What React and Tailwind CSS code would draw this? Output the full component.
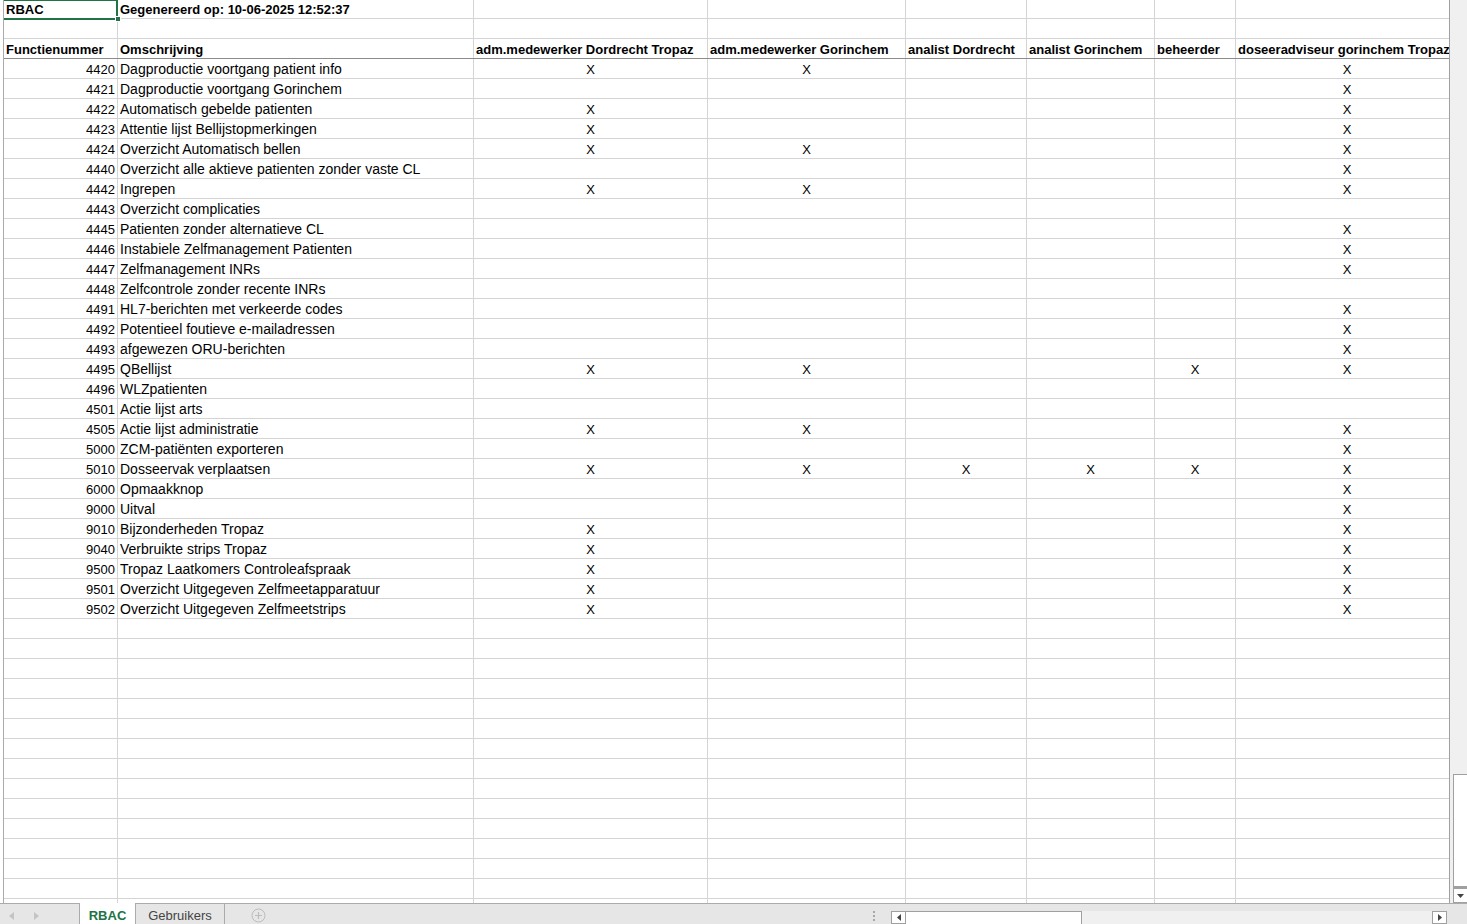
import React from 'react'

const colW = ['w-[114px]', 'w-[356px]', 'w-[234px]', 'w-[198px]', 'w-[121px]', 'w-[128px]', 'w-[81px]', 'w-[223px]']

const headers = [
  'Functienummer',
  'Omschrijving',
  'adm.medewerker Dordrecht Tropaz',
  'adm.medewerker Gorinchem',
  'analist Dordrecht',
  'analist Gorinchem',
  'beheerder',
  'doseeradviseur gorinchem Tropaz',
]

// marks: C..H = role columns
const rows = [
  ['4420', 'Dagproductie voortgang patient info', 'CDH'],
  ['4421', 'Dagproductie voortgang Gorinchem', 'H'],
  ['4422', 'Automatisch gebelde patienten', 'CH'],
  ['4423', 'Attentie lijst Bellijstopmerkingen', 'CH'],
  ['4424', 'Overzicht Automatisch bellen', 'CDH'],
  ['4440', 'Overzicht alle aktieve patienten zonder vaste CL', 'H'],
  ['4442', 'Ingrepen', 'CDH'],
  ['4443', 'Overzicht complicaties', ''],
  ['4445', 'Patienten zonder alternatieve CL', 'H'],
  ['4446', 'Instabiele Zelfmanagement Patienten', 'H'],
  ['4447', 'Zelfmanagement INRs', 'H'],
  ['4448', 'Zelfcontrole zonder recente INRs', ''],
  ['4491', 'HL7-berichten met verkeerde codes', 'H'],
  ['4492', 'Potentieel foutieve e-mailadressen', 'H'],
  ['4493', 'afgewezen ORU-berichten', 'H'],
  ['4495', 'QBellijst', 'CDGH'],
  ['4496', 'WLZpatienten', ''],
  ['4501', 'Actie lijst arts', ''],
  ['4505', 'Actie lijst administratie', 'CDH'],
  ['5000', 'ZCM-patiënten exporteren', 'H'],
  ['5010', 'Dosseervak verplaatsen', 'CDEFGH'],
  ['6000', 'Opmaakknop', 'H'],
  ['9000', 'Uitval', 'H'],
  ['9010', 'Bijzonderheden Tropaz', 'CH'],
  ['9040', 'Verbruikte strips Tropaz', 'CH'],
  ['9500', 'Tropaz Laatkomers Controleafspraak', 'CH'],
  ['9501', 'Overzicht Uitgegeven Zelfmeetapparatuur', 'CH'],
  ['9502', 'Overzicht Uitgegeven Zelfmeetstrips', 'CH'],
]

const roleKeys = ['C', 'D', 'E', 'F', 'G', 'H']

function Cell({ i, children, align = 'left', bold = false, wide = false }) {
  return (
    <div
      className={`${colW[i]} shrink-0 h-full flex items-center pt-[2px] border-r border-[#d4d4d4] px-[2px] whitespace-nowrap overflow-hidden ${
        align === 'right' ? 'justify-end' : align === 'center' ? 'justify-center' : 'justify-start'
      } ${bold ? 'font-bold' : ''} ${wide ? 'text-[14px]' : ''}`}
    >
      {children}
    </div>
  )
}

function Row({ cells, h = 'h-[20px]', dark = false, bold = false }) {
  return (
    <div className={`flex ${h} border-b ${dark ? 'border-[#8c8c8c]' : 'border-[#d4d4d4]'}`}>
      {colW.map((_, i) => {
        const c = cells[i] || {}
        return (
          <Cell key={i} i={i} align={c.align} bold={bold || c.bold} wide={c.wide}>
            {c.text}
          </Cell>
        )
      })}
    </div>
  )
}

export default function App() {
  const blanks = Array.from({ length: 18 })

  return (
    <div className="w-[1467px] h-[924px] overflow-hidden bg-white flex flex-col font-['Liberation_Sans',Arial,sans-serif] text-[13px] text-black">
      {/* sheet area */}
      <div className="flex h-[903px]">
        {/* clipped row headers */}
        <div className="w-[4px] shrink-0 border-r border-[#ababab] bg-white" />

        {/* grid */}
        <div className="relative w-[1445px] shrink-0 overflow-hidden">
          <Row
            h="h-[19px]"
            cells={[{ text: 'RBAC', bold: true }, { text: 'Gegenereerd op: 10-06-2025 12:52:37', bold: true }]}
          />
          <Row cells={[]} />
          <Row dark bold cells={headers.map(t => ({ text: t }))} />
          {rows.map(([num, desc, marks]) => (
            <Row
              key={num}
              cells={[
                { text: num, align: 'right' },
                { text: desc, wide: true },
                ...roleKeys.map(k => ({ text: marks.includes(k) ? 'X' : '', align: 'center' })),
              ]}
            />
          ))}
          {blanks.map((_, i) => (
            <Row key={'b' + i} cells={[]} />
          ))}

          {/* active cell A1 */}
          <div className="absolute left-[-2px] top-[-1px] w-[116px] h-[21px] border-2 border-[#217346] pointer-events-none" />
          <div className="absolute left-[111px] top-[16px] w-[6px] h-[6px] bg-[#217346] border border-white pointer-events-none" />
        </div>

        {/* vertical scrollbar */}
        <div className="w-[18px] shrink-0 border-l border-[#a0a0a0] bg-[#f0f0f0] flex flex-col justify-end">
          <div className="ml-[3px] h-[113px] bg-white border border-r-0 border-[#a0a0a0]" />
          <div className="ml-[3px] h-[16px] bg-white border border-r-0 border-t-2 border-[#a0a0a0] flex items-center justify-center">
            <svg width="7" height="4" viewBox="0 0 7 4">
              <path d="M0 0h7L3.5 4z" fill="#444" />
            </svg>
          </div>
        </div>
      </div>

      {/* sheet tabs bar */}
      <div className="flex h-[21px] border-t border-[#ababab] bg-[#e6e6e6] text-[13px]">
        <div className="w-[79px] shrink-0 flex items-center pt-[3px]">
          <svg className="ml-[9px]" width="5" height="8" viewBox="0 0 5 8">
            <path d="M5 0v8L0 4z" fill="#c4c4c4" />
          </svg>
          <svg className="ml-[20px]" width="5" height="8" viewBox="0 0 5 8">
            <path d="M0 0v8l5-4z" fill="#c4c4c4" />
          </svg>
        </div>
        <div className="w-[57px] shrink-0 -mt-px pt-[4px] bg-white border-l border-r border-[#ababab] flex items-center justify-center font-bold text-[#217346]">
          RBAC
        </div>
        <div className="w-[89px] shrink-0 pt-[3px] border-r border-[#ababab] flex items-center justify-center text-[#444]">
          Gebruikers
        </div>
        <div className="w-[41px] shrink-0 pt-[3px] flex items-center justify-end">
          <svg width="15" height="15" viewBox="0 0 15 15">
            <circle cx="7.5" cy="7.5" r="6.5" fill="none" stroke="#bdbdbd" strokeWidth="1" />
            <path d="M7.5 4v7M4 7.5h7" stroke="#bdbdbd" strokeWidth="1.2" />
          </svg>
        </div>
        <div className="flex-1" />
        <div className="w-[16px] shrink-0 pt-[3px] flex flex-col items-center justify-center gap-[2px]">
          <div className="w-[2px] h-[2px] bg-[#a6a6a6]" />
          <div className="w-[2px] h-[2px] bg-[#a6a6a6]" />
          <div className="w-[2px] h-[2px] bg-[#a6a6a6]" />
        </div>
        <div className="w-[9px] shrink-0" />
        {/* horizontal scrollbar */}
        <div className="w-[556px] shrink-0 flex pt-[7px]">
          <div className="w-[15px] shrink-0 bg-white border border-[#a0a0a0] flex items-center justify-center">
            <svg width="4" height="7" viewBox="0 0 4 7">
              <path d="M4 0v7L0 3.5z" fill="#444" />
            </svg>
          </div>
          <div className="w-[176px] shrink-0 bg-white border border-l-0 border-b-0 border-[#a0a0a0]" />
          <div className="flex-1 bg-[#f0f0f0]" />
          <div className="w-[15px] shrink-0 bg-white border border-[#a0a0a0] flex items-center justify-center">
            <svg width="4" height="7" viewBox="0 0 4 7">
              <path d="M0 0v7l4-3.5z" fill="#444" />
            </svg>
          </div>
        </div>
        <div className="w-[20px] shrink-0" />
      </div>
    </div>
  )
}
